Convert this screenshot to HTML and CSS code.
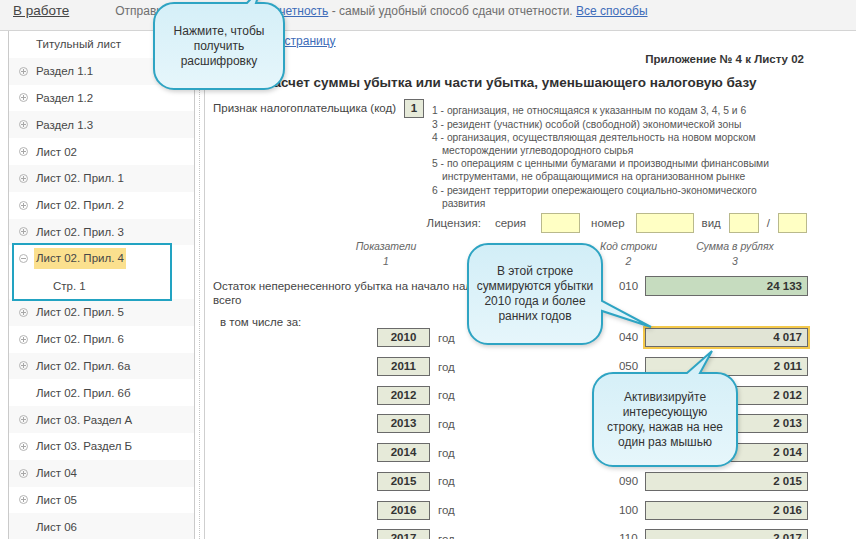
FILE: index.html
```html
<!DOCTYPE html>
<html lang="ru">
<head>
    <meta charset="UTF-8">
    <meta name="viewport" content="width=device-width, initial-scale=1.0">
    <title>Приложение № 4 к Листу 02</title>
    <link rel="stylesheet" href="styles.css">
</head>
<body>

    <div class="topbar">
        <a href="#" class="status">В работе</a>
        <span class="promo">Отправьте отчет через <a href="#">1С-Отчетность</a> - самый удобный способ сдачи отчетности. <a href="#">Все способы</a></span>
    </div>

    <div class="workspace">
        <nav class="tree">
            <div class="node"><span class="toggle empty"></span>Титульный лист</div>
            <div class="node"><span class="toggle plus"></span>Раздел 1.1</div>
            <div class="node"><span class="toggle plus"></span>Раздел 1.2</div>
            <div class="node"><span class="toggle plus"></span>Раздел 1.3</div>
            <div class="node"><span class="toggle plus"></span>Лист 02</div>
            <div class="node"><span class="toggle plus"></span>Лист 02. Прил. 1</div>
            <div class="node"><span class="toggle plus"></span>Лист 02. Прил. 2</div>
            <div class="node"><span class="toggle plus"></span>Лист 02. Прил. 3</div>
            <div class="group">
                <div class="node"><span class="toggle"></span><span class="current">Лист 02. Прил. 4</span></div>
                <div class="node child">Стр. 1</div>
            </div>
            <div class="node"><span class="toggle plus"></span>Лист 02. Прил. 5</div>
            <div class="node"><span class="toggle plus"></span>Лист 02. Прил. 6</div>
            <div class="node"><span class="toggle plus"></span>Лист 02. Прил. 6а</div>
            <div class="node"><span class="toggle empty"></span>Лист 02. Прил. 6б</div>
            <div class="node"><span class="toggle plus"></span>Лист 03. Раздел А</div>
            <div class="node"><span class="toggle plus"></span>Лист 03. Раздел Б</div>
            <div class="node"><span class="toggle plus"></span>Лист 04</div>
            <div class="node"><span class="toggle plus"></span>Лист 05</div>
            <div class="node"><span class="toggle empty"></span>Лист 06</div>
        </nav>

        <div class="splitter"></div>

        <main class="sheet">
            <div class="form">
                <a href="#" class="page-link">Очистить страницу</a>
                <div class="appendix">Приложение № 4 к Листу 02</div>
                <h1 class="title">Расчет суммы убытка или части убытка, уменьшающего налоговую базу</h1>

                <div class="taxpayer">
                    <div class="taxpayer-label">Признак налогоплательщика (код)</div>
                    <div class="code-box">1</div>
                    <ul class="legend">
                        <li>1 - организация, не относящаяся к указанным по кодам 3, 4, 5 и 6</li>
                        <li>3 - резидент (участник) особой (свободной) экономической зоны</li>
                        <li>4 - организация, осуществляющая деятельность на новом морском месторождении углеводородного сырья</li>
                        <li>5 - по операциям с ценными бумагами и производными финансовыми инструментами, не обращающимися на организованном рынке</li>
                        <li>6 - резидент территории опережающего социально-экономического развития</li>
                    </ul>
                </div>

                <div class="license">
                    <span>Лицензия:</span>
                    <span class="lic-series">серия</span>
                    <span class="field w-series"></span>
                    <span class="lic-number">номер</span>
                    <span class="field w-number"></span>
                    <span class="lic-small">вид</span>
                    <span class="field w-kind"></span>
                    <span class="lic-small">/</span>
                    <span class="field w-kind2"></span>
                </div>

                <div class="trow heads">
                    <div class="head-name">Показатели<br>1</div>
                    <div class="head-code">Код строки<br>2</div>
                    <div class="head-sum">Сумма в рублях<br>3</div>
                </div>

                <div class="trow total">
                    <div class="total-label">Остаток неперенесенного убытка на начало налогового периода - всего</div>
                    <div class="code">010</div>
                    <div class="amount green">24 133</div>
                </div>

                <div class="subhead">в том числе за:</div>

                <div class="trow year"><div class="year-cell"><span class="year-box">2010</span>год</div><div class="code">040</div><div class="amount active">4 017</div></div>
                <div class="trow year"><div class="year-cell"><span class="year-box">2011</span>год</div><div class="code">050</div><div class="amount">2 011</div></div>
                <div class="trow year"><div class="year-cell"><span class="year-box">2012</span>год</div><div class="code">060</div><div class="amount">2 012</div></div>
                <div class="trow year"><div class="year-cell"><span class="year-box">2013</span>год</div><div class="code">070</div><div class="amount">2 013</div></div>
                <div class="trow year"><div class="year-cell"><span class="year-box">2014</span>год</div><div class="code">080</div><div class="amount">2 014</div></div>
                <div class="trow year"><div class="year-cell"><span class="year-box">2015</span>год</div><div class="code">090</div><div class="amount">2 015</div></div>
                <div class="trow year"><div class="year-cell"><span class="year-box">2016</span>год</div><div class="code">100</div><div class="amount">2 016</div></div>
                <div class="trow year"><div class="year-cell"><span class="year-box">2017</span>год</div><div class="code">110</div><div class="amount">2 017</div></div>
            </div>
        </main>
    </div>

    <!-- hint bubbles -->
    <div class="callout hint-decode">
        <svg width="132" height="88">
            <defs>
                <linearGradient id="fill1" x1="0" y1="0" x2="0" y2="1">
                    <stop offset="0" stop-color="#d2eef7"/>
                    <stop offset="1" stop-color="#e6f6fb"/>
                </linearGradient>
            </defs>
            <path d="M21,1 H94 L108,-14 L103,1 H111 A20,20 0 0 1 131,21 V67 A20,20 0 0 1 111,87 H21 A20,20 0 0 1 1,67 V21 A20,20 0 0 1 21,1 Z" fill="url(#fill1)" stroke="#2ea4c3" stroke-width="2"/>
        </svg>
        <div class="callout-text">Нажмите, чтобы<br>получить<br>расшифровку</div>
    </div>

    <div class="callout hint-sum">
        <svg width="136" height="102">
            <defs>
                <linearGradient id="fill2" x1="0" y1="0" x2="0" y2="1">
                    <stop offset="0" stop-color="#d2eef7"/>
                    <stop offset="1" stop-color="#e6f6fb"/>
                </linearGradient>
            </defs>
            <path d="M21,1 H115 A20,20 0 0 1 135,21 V58 L184,84 L135,68 V81 A20,20 0 0 1 115,101 H21 A20,20 0 0 1 1,81 V21 A20,20 0 0 1 21,1 Z" fill="url(#fill2)" stroke="#2ea4c3" stroke-width="2"/>
        </svg>
        <div class="callout-text">В этой строке<br>суммируются убытки<br>2010 года и более<br>ранних годов</div>
    </div>

    <div class="callout hint-row">
        <svg width="146" height="95">
            <defs>
                <linearGradient id="fill3" x1="0" y1="0" x2="0" y2="1">
                    <stop offset="0" stop-color="#d2eef7"/>
                    <stop offset="1" stop-color="#e6f6fb"/>
                </linearGradient>
            </defs>
            <path d="M21,1 H95 L120,-21 L108,1 H125 A20,20 0 0 1 145,21 V74 A20,20 0 0 1 125,94 H21 A20,20 0 0 1 1,74 V21 A20,20 0 0 1 21,1 Z" fill="url(#fill3)" stroke="#2ea4c3" stroke-width="2"/>
        </svg>
        <div class="callout-text">Активизируйте<br>интересующую<br>строку, нажав на нее<br>один раз мышью</div>
    </div>

</body>
</html>
```

FILE: styles.css
```css
* {
    box-sizing: border-box;
}
html, body {
    margin: 0;
    height: 100%;
}
body {
    position: relative;
    overflow: hidden;
    background: #fff;
    font-family: "Liberation Sans", Arial, sans-serif;
    font-size: 11.5px;
    color: #444;
}
a {
    color: #3d6cb9;
    text-decoration: underline;
}

/* top status line */
.topbar {
    display: flex;
    align-items: center;
    height: 31px;
    padding: 0 0 9px 13px;
    background: #f3f3f3;
    border-bottom: 1px solid #d4d4d4;
}
.status {
    color: #454545;
    font-size: 13.5px;
}
.promo {
    margin-left: 46px;
    font-size: 12px;
    color: #6e6e6e;
}

.workspace {
    display: flex;
    height: calc(100% - 31px);
}

/* sheet tree */
.tree {
    width: 187px;
    margin-left: 8px;
    border-left: 1px solid #cacaca;
    border-right: 1px solid #cacaca;
    overflow: hidden;
}
.node {
    display: flex;
    align-items: center;
    gap: 8px;
    height: 26.8px;
    padding-left: 10px;
    white-space: nowrap;
    color: #474747;
}
.tree > .node:nth-child(even) {
    background: #f8f8f8;
}
.toggle {
    position: relative;
    flex: none;
    width: 9px;
    height: 9px;
    border: 1px solid #b4b4b4;
    border-radius: 50%;
}
.toggle::before,
.toggle.plus::after {
    content: "";
    position: absolute;
    background: #a8a8a8;
}
.toggle::before {
    left: 1px;
    right: 1px;
    top: 3px;
    height: 1px;
}
.toggle.plus::after {
    top: 1px;
    bottom: 1px;
    left: 3px;
    width: 1px;
}
.toggle.empty {
    visibility: hidden;
}
.group {
    margin: 0 24px 0 5px;
    outline: 2px solid #22a3c2;
    background: #fff;
}
.group .node {
    padding-left: 5px;
}
.group .node.child {
    padding-left: 39px;
}
.current {
    margin-left: -2px;
    padding: 0 2px;
    line-height: 21px;
    background: #fbe08e;
}

.splitter {
    flex: none;
    width: 5px;
    margin-left: 4px;
    border-left: 1px dotted #c4c4c4;
}

/* declaration sheet */
.sheet {
    flex: 1;
    padding-left: 8px;
    border-left: 1px solid #cfcfcf;
    overflow: hidden;
}
.form {
    width: 595px;
}
.page-link {
    display: block;
    width: max-content;
    margin: 3px 0 0 16px;
    font-size: 12px;
    line-height: 14px;
}
.appendix {
    margin-top: 4px;
    padding-right: 4px;
    text-align: right;
    font-weight: bold;
    line-height: 14px;
    color: #353535;
}
.title {
    margin: 8px 0 0;
    font-size: 13.5px;
    line-height: 18px;
    text-align: center;
    color: #303030;
}

.taxpayer {
    display: flex;
    align-items: flex-start;
    margin-top: 7px;
}
.taxpayer-label {
    width: 191px;
    margin-top: 2px;
    line-height: 14px;
}
.code-box {
    width: 20px;
    height: 19px;
    border: 1px solid #6a6a6a;
    background: #e6ead9;
    text-align: center;
    font-weight: bold;
    line-height: 17px;
    color: #333;
}
.legend {
    width: 342px;
    margin: 5.4px 0 0 8px;
    padding: 0;
    list-style: none;
    font-size: 10.3px;
    line-height: 13.2px;
    color: #555;
}
.legend li {
    padding-left: 10px;
    text-indent: -10px;
}

.license {
    display: flex;
    align-items: center;
    justify-content: flex-end;
    height: 20px;
    margin-top: 3.4px;
    padding-right: 1px;
    color: #555;
}
.lic-series {
    margin: 0 15px 0 14px;
}
.lic-number {
    margin: 0 11px;
}
.lic-small {
    margin: 0 8px;
}
.field {
    height: 20px;
    border: 1px solid #b9b98c;
    background: #ffffc4;
}
.w-series { width: 39px; }
.w-number { width: 58px; }
.w-kind { width: 30px; }
.w-kind2 { width: 29px; }

/* indicator table */
.trow {
    display: grid;
    grid-template-columns: 399px 33px 163px;
}
.heads {
    margin-top: 5.5px;
    font-style: italic;
    font-size: 10.5px;
    line-height: 15px;
    color: #666;
    text-align: center;
}
.heads > div {
    display: flex;
    flex-direction: column;
    align-items: center;
    white-space: nowrap;
}
.head-name {
    padding-right: 53px;
}
.head-sum {
    padding-left: 17px;
}
.total {
    margin-top: 7.5px;
}
.total-label {
    width: 360px;
    padding-top: 3px;
    line-height: 14px;
}
.code {
    text-align: center;
    color: #555;
}
.total .code {
    padding-top: 3px;
    line-height: 14px;
}
.amount {
    height: 19px;
    padding-right: 5px;
    border: 1px solid #6a6a6a;
    background: #e6ead9;
    text-align: right;
    font-weight: bold;
    line-height: 17px;
    color: #333;
}
.amount.green {
    height: 20px;
    line-height: 18px;
    background: #c6dcbf;
}
.amount.active {
    background: #e1e4d5;
    box-shadow: 0 0 0 2px #f4c94c;
}
.subhead {
    margin-top: 9px;
    padding-left: 7px;
    line-height: 12px;
}
.year {
    height: 19px;
    margin-bottom: 9.7px;
}
.year .code {
    line-height: 19px;
}
.year-cell {
    display: flex;
    align-items: center;
    gap: 8px;
    padding-left: 164px;
    color: #555;
}
.year-box {
    width: 53px;
    height: 19px;
    border: 1px solid #6a6a6a;
    background: #e6ead9;
    text-align: center;
    font-weight: bold;
    line-height: 17px;
    color: #333;
}

/* hint bubbles over the form */
.callout {
    position: absolute;
}
.callout svg {
    position: absolute;
    left: 0;
    top: 0;
    overflow: visible;
    filter: drop-shadow(1px 2px 2px rgba(0, 0, 0, 0.18));
}
.callout-text {
    position: relative;
    display: flex;
    align-items: center;
    justify-content: center;
    height: 100%;
    text-align: center;
    font-size: 12px;
    line-height: 15px;
    color: #333;
}
.hint-decode {
    left: 153px;
    top: 2px;
    width: 132px;
    height: 88px;
}
.hint-sum {
    left: 467px;
    top: 243px;
    width: 136px;
    height: 102px;
}
.hint-row {
    left: 592px;
    top: 372px;
    width: 146px;
    height: 95px;
}
```
